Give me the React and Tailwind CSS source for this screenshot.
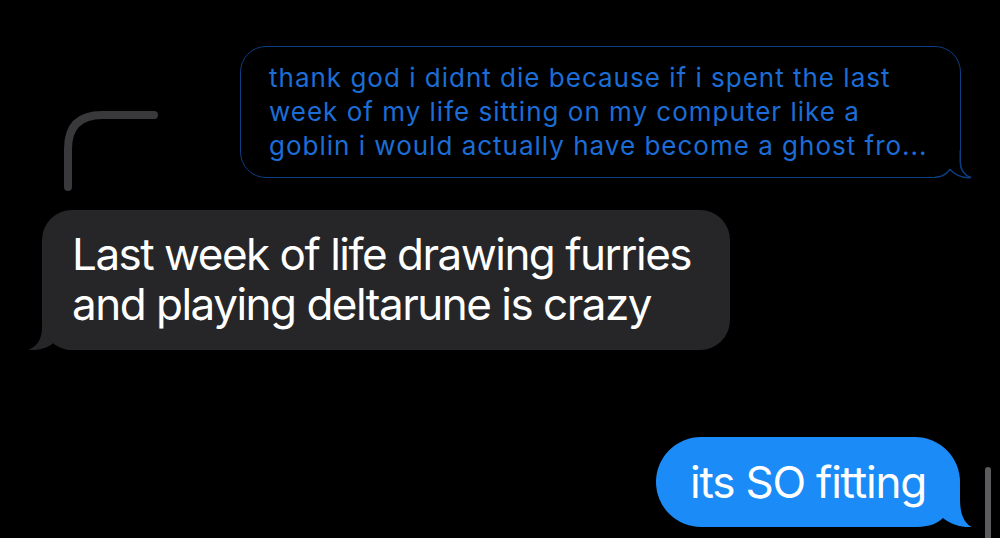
import React from "react";

export default function App() {
  const font = { fontFamily: "Inter, 'Noto Sans', sans-serif" };
  return (
    <div
      className="relative w-[1000px] h-[538px] bg-black overflow-hidden flex flex-col"
      style={font}
    >
      {/* Reply row */}
      <div className="flex pt-[46px]">
        <div className="w-[240px] flex items-end">
          <svg
            className="ml-[60px] mb-[-19px]"
            width="100"
            height="90"
            viewBox="0 0 100 90"
          >
            <path
              d="M8 80 L8 42 Q8 8 42 8 L94 8"
              fill="none"
              stroke="#39393b"
              strokeWidth="8"
              strokeLinecap="round"
            />
          </svg>
        </div>
        <div className="relative w-[721px] h-[132px]">
          <div className="w-full h-full border-[1.5px] border-[#0b3d80] rounded-[26px] pl-[28px] pt-[14px] text-[26px] leading-[34px] tracking-[1px] text-[#1c6dd6] whitespace-nowrap">
            <p>thank god i didnt die because if i spent the last</p>
            <p>week of my life sitting on my computer like a</p>
            <p>goblin i would actually have become a ghost fro...</p>
          </div>
          <svg
            className="absolute left-[695px] top-[104px]"
            width="40"
            height="30"
            viewBox="0 0 40 30"
          >
            <rect x="0" y="0" width="26.5" height="28.5" fill="#000" />
            <path
              d="M25.25 0 L25.25 12 C25.25 20 29 25 36 27.6 C28 28.4 20 24.5 15 19.5 C11 24.5 6 27.25 0 27.25"
              fill="none"
              stroke="#0b3d80"
              strokeWidth="1.5"
            />
          </svg>
        </div>
      </div>

      {/* Gray incoming bubble */}
      <div className="mt-[32px] ml-[42px] relative w-[688px] h-[140px]">
        <svg
          className="absolute left-[-14px] bottom-0"
          width="50"
          height="50"
          viewBox="0 0 50 50"
        >
          <path
            d="M44 20 L14 20 L14 28 C14 40 8 47 0 50 C10 51 20 48 27 42 C31 47 37 50 44 50 Z"
            fill="#262628"
          />
        </svg>
        <div className="relative w-full h-full bg-[#262628] rounded-[30px] pl-[30px] pt-[19px] text-[44px] leading-[50px] tracking-[-1.5px] text-white whitespace-nowrap">
          <p>Last week of life drawing furries</p>
          <p>and playing deltarune is crazy</p>
        </div>
      </div>

      {/* Blue outgoing bubble */}
      <div className="mt-[87px] ml-[656px] relative w-[304px] h-[90px]">
        <svg
          className="absolute right-[-12px] bottom-0"
          width="60"
          height="60"
          viewBox="0 0 60 60"
        >
          <path
            d="M3 15 L48 15 L48 33 C48 48 53 57 60 60 C50 61 38 57 31 51 C26 56 18 60 3 60 Z"
            fill="#1b8bf7"
          />
        </svg>
        <div className="relative w-full h-full bg-[#1b8bf7] rounded-full pl-[34px] flex items-center text-[44px] tracking-[-1.2px] text-white whitespace-nowrap">
          <span>its SO fitting</span>
        </div>
      </div>

      {/* Scrollbar indicator */}
      <div className="absolute left-[985px] top-[467px] w-[6px] h-[90px] rounded-full bg-[#5c5c5e]" />
    </div>
  );
}
